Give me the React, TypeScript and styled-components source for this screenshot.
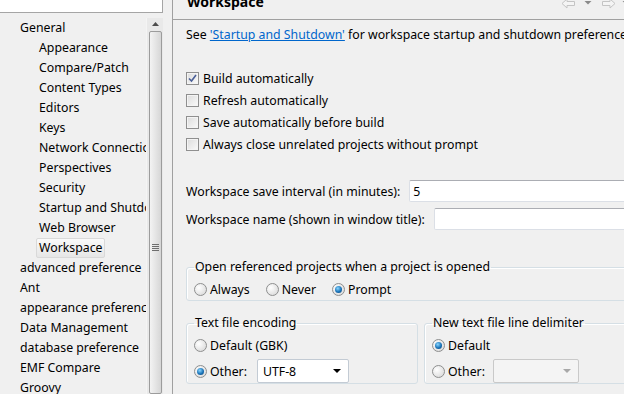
import styled, { createGlobalStyle } from "styled-components";

const GlobalStyle = createGlobalStyle`
  html, body {
    margin: 0;
    padding: 0;
    background: #f0f0f0;
  }
  body {
    font-family: "Noto Sans", "Liberation Sans", sans-serif;
    font-size: 12.3px;
    color: #000;
  }
`;

const Window = styled.div`
  display: flex;
  width: 624px;
  height: 394px;
  overflow: hidden;
  background: #f0f0f0;
`;

/* ---------- left: filter + tree ---------- */

const LeftPane = styled.div`
  display: flex;
  flex-direction: column;
  width: 163px;
  flex-shrink: 0;
`;

const FilterBox = styled.div`
  height: 12px;
  background: #fff;
  border-right: 1px solid #a5a5a5;
  border-bottom: 1px solid #a5a5a5;
`;

const TreeArea = styled.div`
  display: flex;
  flex: 1;
  margin-top: 4px;
  overflow: hidden;
`;

const Tree = styled.div`
  width: 146px;
  padding-top: 1px;
  overflow: hidden;
  white-space: nowrap;
`;

const TreeRow = styled.div<{ $depth: number }>`
  height: 20px;
  display: flex;
  align-items: center;
  padding-left: ${(p) => (p.$depth === 0 ? 20 : 39)}px;
`;

const TreeLabel = styled.span<{ $selected?: boolean }>`
  line-height: 18px;
  padding: 0 2px;
  margin-left: -3px;
  border: 1px solid ${(p) => (p.$selected ? "#d9d9d9" : "transparent")};
  border-radius: 2px;
  background: ${(p) =>
    p.$selected ? "linear-gradient(#fafafa, #e6e6e6)" : "transparent"};
`;

const ScrollBar = styled.div`
  width: 16px;
  margin-top: 1px;
  display: flex;
  flex-direction: column;
  align-items: center;
  background: #e9e9e9;
  border-left: 1px solid #f4f4f4;
`;

const ScrollArrow = styled.div`
  height: 18px;
  display: flex;
  align-items: center;
  justify-content: center;
  width: 100%;
`;

const ScrollThumb = styled.div`
  margin-top: 1px;
  width: 13px;
  height: 430px;
  box-sizing: border-box;
  border: 1px solid #9c9c9c;
  border-radius: 2px;
  background: linear-gradient(90deg, #f3f3f3, #e2e2e2 60%, #d6d6d6);
  display: flex;
  justify-content: center;
  padding-top: 212px;
`;

const Grip = styled.div`
  width: 7px;
  height: 7px;
  background: repeating-linear-gradient(
    #6e6e6e 0 1px,
    transparent 1px 2px
  );
`;

/* ---------- right: page ---------- */

const Sash = styled.div`
  width: 9px;
  flex-shrink: 0;
`;

const RightPane = styled.div`
  flex: 1;
  border-left: 1px solid #a0a0a0;
  overflow: hidden;
  display: flex;
  flex-direction: column;
`;

const Header = styled.div`
  height: 19px;
  border-bottom: 1px solid #a0a0a0;
  display: flex;
  align-items: flex-start;
  justify-content: space-between;
  padding-left: 14px;
  overflow: hidden;
`;

const Title = styled.div`
  font-weight: bold;
  font-size: 14px;
  line-height: 16px;
  margin-top: -6px;
`;

const NavIcons = styled.div`
  display: flex;
  align-items: flex-start;
  margin-top: -2px;
  margin-right: -6px;
`;

const NavSlot = styled.span<{ $gap: number }>`
  display: flex;
  margin-left: ${(p) => p.$gap}px;
`;

const Body = styled.div`
  width: 520px;
  padding-left: 13px;
  display: flex;
  flex-direction: column;
`;

const Intro = styled.div`
  margin-top: 7px;
  line-height: 16px;
  white-space: nowrap;
`;

const Link = styled.a`
  color: #0066cc;
  text-decoration: underline;
`;

const CheckList = styled.div`
  margin-top: 24px;
  display: flex;
  flex-direction: column;
`;

const CheckRow = styled.label`
  height: 22px;
  display: flex;
  align-items: center;
  gap: 4px;
`;

const CheckBox = styled.span`
  width: 13px;
  height: 13px;
  box-sizing: border-box;
  border: 1px solid #8f8f8f;
  background: linear-gradient(135deg, #dcdcdc, #fafafa);
  box-shadow: inset 0 0 0 1px #f4f4f4;
  display: flex;
  align-items: center;
  justify-content: center;
`;

const FieldRow = styled.div<{ $top: number }>`
  margin-top: ${(p) => p.$top}px;
  display: flex;
  align-items: center;
  gap: 9px;
  white-space: nowrap;
`;

const TextInput = styled.div`
  flex: 1;
  height: 22px;
  box-sizing: border-box;
  background: #fff;
  border: 1px solid #dbdfe6;
  border-top-color: #abadb3;
  border-radius: 2px;
  padding-left: 3px;
  display: flex;
  align-items: center;
`;

const Group = styled.fieldset<{ $top: number }>`
  margin: ${(p) => p.$top}px 0 0;
  padding: 0 7px;
  min-width: 0;
  border: 1px solid #d5dfe5;
  border-radius: 3px;
  box-shadow: inset 1px 1px 0 #fff;
`;

const Legend = styled.legend`
  padding: 0 1px;
  line-height: 16px;
`;

const RadioLine = styled.div<{ $height: number; $top?: number }>`
  height: ${(p) => p.$height}px;
  margin-top: ${(p) => p.$top ?? 0}px;
  display: flex;
  align-items: center;
  gap: 16px;
`;

const RadioItem = styled.label`
  display: flex;
  align-items: center;
  gap: 3px;
  white-space: nowrap;
`;

const RadioDot = styled.span<{ $on?: boolean }>`
  width: 13px;
  height: 13px;
  box-sizing: border-box;
  border-radius: 50%;
  border: 1px solid #8e8f8f;
  background: radial-gradient(circle at 35% 35%, #fff, #d4d4d4);
  display: flex;
  align-items: center;
  justify-content: center;
  &::after {
    content: "";
    display: ${(p) => (p.$on ? "block" : "none")};
    width: 7px;
    height: 7px;
    border-radius: 50%;
    background: radial-gradient(circle at 40% 35%, #8ad6ff, #1a73b8 55%, #0d3f6d);
  }
`;

const Columns = styled.div`
  display: grid;
  grid-template-columns: 232px 1fr;
  gap: 6px;
  margin-top: 14px;
`;

const Combo = styled.div<{ $disabled?: boolean; $width: number; $gap: number }>`
  width: ${(p) => p.$width}px;
  height: 24px;
  box-sizing: border-box;
  margin-left: ${(p) => p.$gap}px;
  border: 1px solid ${(p) => (p.$disabled ? "#c9c9c9" : "#c3cbd4")};
  border-radius: 2px;
  background: ${(p) => (p.$disabled ? "#f4f4f4" : "#fff")};
  display: flex;
  align-items: center;
  justify-content: space-between;
  padding: 0 7px 0 5px;
`;

const ComboArrow = styled.span<{ $disabled?: boolean }>`
  width: 0;
  height: 0;
  border-left: 4px solid transparent;
  border-right: 4px solid transparent;
  border-top: 4px solid ${(p) => (p.$disabled ? "#a8a8a8" : "#000")};
`;

const generalChildren = [
  "Appearance",
  "Compare/Patch",
  "Content Types",
  "Editors",
  "Keys",
  "Network Connections",
  "Perspectives",
  "Security",
  "Startup and Shutdown",
  "Web Browser",
  "Workspace",
];

const topLevel = [
  "advanced preference",
  "Ant",
  "appearance preference",
  "Data Management",
  "database preference",
  "EMF Compare",
  "Groovy",
];

const checks = [
  { label: "Build automatically", checked: true },
  { label: "Refresh automatically", checked: false },
  { label: "Save automatically before build", checked: false },
  { label: "Always close unrelated projects without prompt", checked: false },
];

function NavArrow({ flip }: { flip?: boolean }) {
  return (
    <svg width="15" height="11" viewBox="0 0 15 11" style={flip ? { transform: "scaleX(-1)" } : undefined}>
      <path d="M1 5.5 L6 1 V3.5 H13.5 V7.5 H6 V10 Z" fill="#f4f4f4" stroke="#c4c4c4" strokeLinejoin="round" />
    </svg>
  );
}

function DropTri() {
  return (
    <svg width="8" height="8" viewBox="0 0 8 8">
      <path d="M0.5 3 H7.5 L4 6.5 Z" fill="#8a8a8a" />
    </svg>
  );
}

export default function App() {
  return (
    <>
      <GlobalStyle />
      <Window>
        <LeftPane>
          <FilterBox />
          <TreeArea>
            <Tree>
              <TreeRow $depth={0}>
                <TreeLabel>General</TreeLabel>
              </TreeRow>
              {generalChildren.map((name) => (
                <TreeRow key={name} $depth={1}>
                  <TreeLabel $selected={name === "Workspace"}>{name}</TreeLabel>
                </TreeRow>
              ))}
              {topLevel.map((name) => (
                <TreeRow key={name} $depth={0}>
                  <TreeLabel>{name}</TreeLabel>
                </TreeRow>
              ))}
            </Tree>
            <ScrollBar>
              <ScrollArrow>
                <svg width="7" height="4" viewBox="0 0 7 4">
                  <path d="M0 4 L3.5 0 L7 4 Z" fill="#4d4d4d" />
                </svg>
              </ScrollArrow>
              <ScrollThumb>
                <Grip />
              </ScrollThumb>
            </ScrollBar>
          </TreeArea>
        </LeftPane>
        <Sash />
        <RightPane>
          <Header>
            <Title>Workspace</Title>
            <NavIcons>
              <NavSlot $gap={0}>
                <NavArrow />
              </NavSlot>
              <NavSlot $gap={8}>
                <DropTri />
              </NavSlot>
              <NavSlot $gap={9}>
                <NavArrow flip />
              </NavSlot>
              <NavSlot $gap={6}>
                <DropTri />
              </NavSlot>
            </NavIcons>
          </Header>
          <Body>
            <Intro>
              See <Link>'Startup and Shutdown'</Link> for workspace startup and shutdown preferences.
            </Intro>
            <CheckList>
              {checks.map((c) => (
                <CheckRow key={c.label}>
                  <CheckBox>
                    {c.checked && (
                      <svg width="9" height="9" viewBox="0 0 9 9">
                        <path d="M1 4.5 L3.5 7 L8 1" fill="none" stroke="#4a5f97" strokeWidth="1.6" />
                      </svg>
                    )}
                  </CheckBox>
                  {c.label}
                </CheckRow>
              ))}
            </CheckList>
            <FieldRow $top={25}>
              Workspace save interval (in minutes):
              <TextInput>5</TextInput>
            </FieldRow>
            <FieldRow $top={6}>
              Workspace name (shown in window title):
              <TextInput />
            </FieldRow>
            <Group $top={29}>
              <Legend>Open referenced projects when a project is opened</Legend>
              <RadioLine $height={22} $top={3}>
                <RadioItem>
                  <RadioDot />
                  Always
                </RadioItem>
                <RadioItem>
                  <RadioDot />
                  Never
                </RadioItem>
                <RadioItem>
                  <RadioDot $on />
                  Prompt
                </RadioItem>
              </RadioLine>
            </Group>
            <Columns>
              <Group $top={0}>
                <Legend>Text file encoding</Legend>
                <RadioLine $height={20} $top={4}>
                  <RadioItem>
                    <RadioDot />
                    Default (GBK)
                  </RadioItem>
                </RadioLine>
                <RadioLine $height={24} $top={4}>
                  <RadioItem>
                    <RadioDot $on />
                    Other:
                  </RadioItem>
                  <Combo $width={92} $gap={-6}>
                    UTF-8
                    <ComboArrow />
                  </Combo>
                </RadioLine>
              </Group>
              <Group $top={0}>
                <Legend>New text file line delimiter</Legend>
                <RadioLine $height={20} $top={4}>
                  <RadioItem>
                    <RadioDot $on />
                    Default
                  </RadioItem>
                </RadioLine>
                <RadioLine $height={24} $top={4}>
                  <RadioItem>
                    <RadioDot />
                    Other:
                  </RadioItem>
                  <Combo $width={86} $gap={-8} $disabled>
                    <span />
                    <ComboArrow $disabled />
                  </Combo>
                </RadioLine>
              </Group>
            </Columns>
          </Body>
        </RightPane>
      </Window>
    </>
  );
}
